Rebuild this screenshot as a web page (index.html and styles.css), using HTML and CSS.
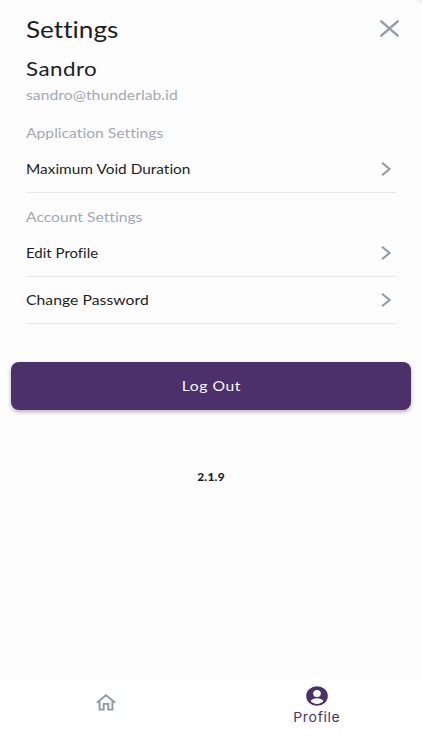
FILE: index.html
```
<!DOCTYPE html>
<html lang="en">
<head>
  <meta charset="UTF-8">
  <meta name="viewport" content="width=device-width, initial-scale=1.0">
  <title>Settings</title>
  <link rel="stylesheet" href="styles.css">
</head>
<body>
  <main class="content">
    <header class="header">
      <h1 class="title wide">Settings</h1>
      <svg class="close" viewBox="0 0 18 16" preserveAspectRatio="none"><path d="M1.2 1.2 16.8 14.8M16.8 1.2 1.2 14.8"/></svg>
    </header>

    <section class="user">
      <h2 class="user-name wide">Sandro</h2>
      <p class="user-email wide">sandro@thunderlab.id</p>
    </section>

    <section class="group">
      <h3 class="group-title wide">Application Settings</h3>
      <a class="row"><span class="wide void">Maximum Void Duration</span><svg class="chevron" viewBox="0 0 10 14"><path d="M1 .8 8.6 7 1 13.2"/></svg></a>
    </section>

    <section class="group">
      <h3 class="group-title wide">Account Settings</h3>
      <a class="row"><span class="wide edit">Edit Profile</span><svg class="chevron" viewBox="0 0 10 14"><path d="M1 .8 8.6 7 1 13.2"/></svg></a>
      <a class="row"><span class="wide password">Change Password</span><svg class="chevron" viewBox="0 0 10 14"><path d="M1 .8 8.6 7 1 13.2"/></svg></a>
    </section>

    <button class="logout"><span class="wide">Log Out</span></button>
    <div class="version"><span>2.1.9</span></div>
  </main>

  <nav class="tabs">
    <a class="tab">
      <svg class="home" viewBox="0 0 20 17"><path d="M.8 8.7 10 1.300 19.200 8.700M3.600 7.200V15.600H7.700V9.900H12.300V15.600H16.400V7.200"/></svg>
    </a>
    <a class="tab active">
      <svg class="person" viewBox="0 0 22 20" preserveAspectRatio="none"><ellipse cx="11" cy="10" rx="10.8" ry="9.8"/><ellipse class="hole" cx="11" cy="7.4" rx="3.8" ry="3.5"/><path class="hole" d="M4.6 15C5.8 13 8.3 12.2 11 12.2S16.2 13 17.4 15C16 16.8 13.7 17.9 11 17.9S6 16.8 4.6 15z"/></svg>
      <span class="tab-label">Profile</span>
    </a>
  </nav>
</body>
</html>
```
FILE: styles.css
```
* { box-sizing: border-box; }
body {
  margin: 0;
  height: 750px;
  display: flex;
  flex-direction: column;
  background: radial-gradient(circle at 422px -4px, #dcdcdc 0, #fdfdfd 9px);
  color: #1c1d22;
  font-family: Lato, sans-serif;
  font-variant-ligatures: none;
  overflow: hidden;
}
h1, h2, h3, p { margin: 0; font-weight: 400; }
svg { display: block; flex: none; }
.content { flex: 1; }
/* extended letterforms */
.wide {
  display: block;
  width: max-content;
  transform: scaleX(1.12);
  transform-origin: left;
}
.header {
  display: flex;
  justify-content: space-between;
  align-items: flex-start;
  height: 54px;
  padding: 15px 23px 0 26px;
}
.title { font-size: 24px; line-height: 28px; transform: scaleX(1.09); }
.close {
  width: 19px;
  height: 17px;
  margin-top: 5px;
  fill: none;
  stroke: #949ba8;
  stroke-width: 2.2;
  stroke-linecap: round;
}
.user { height: 68px; padding: 1px 26px 0; }
.user-name { font-size: 20px; line-height: 26px; letter-spacing: 0.4px; }
.user-email {
  margin-top: 5px;
  font-size: 14px;
  line-height: 18px;
  letter-spacing: 0.05px;
  color: #a3a9b3;
}
.group { padding: 0 26px; }
.group-title {
  height: 24px;
  font-size: 14px;
  line-height: 22px;
  color: #a3a9b3;
}
.group + .group { padding-top: 13px; }
.row {
  display: flex;
  align-items: center;
  justify-content: space-between;
  height: 47px;
  padding: 0 5px 1px 0;
  border-bottom: 1px solid #e6e7ea;
  font-size: 14px;
}
.void { transform: scaleX(1.1); }
.edit { transform: scaleX(1.07); }
.password { letter-spacing: 0.05px; }
.chevron {
  width: 10px;
  height: 14px;
  fill: none;
  stroke: #949ba4;
  stroke-width: 2.1;
}
.logout {
  display: flex;
  align-items: center;
  justify-content: center;
  width: 400px;
  height: 48px;
  margin: 38px 11px 0;
  padding: 0 0 1px;
  border: 0;
  border-radius: 8px;
  background: #4b3069;
  box-shadow: 0 2px 4px rgba(50, 35, 70, 0.35);
  color: #fbf7ff;
  font-family: Lato, sans-serif;
  font-size: 14px;
  letter-spacing: 0.5px;
}
.logout .wide { transform-origin: center; }
.version {
  margin-top: 58px;
  text-align: center;
  font-size: 12px;
  line-height: 18px;
  font-weight: 900;
  letter-spacing: 0.2px;
}
.tabs { display: flex; height: 73px; background: #fff; }
.tab {
  flex: 1;
  display: flex;
  flex-direction: column;
  align-items: center;
}
.home {
  width: 20px;
  height: 17px;
  margin-top: 17px;
  fill: none;
  stroke: #9299a3;
  stroke-width: 1.9;
}
.person { width: 22px; height: 20px; margin-top: 9px; fill: #4b3069; }
.hole { fill: #fff; }
.tab-label {
  margin-top: 2px;
  color: #4b3069;
  font-family: Inter, sans-serif;
  font-size: 13px;
  line-height: 18px;
  letter-spacing: 0.6px;
  transform: scaleX(1.08);
}
```
